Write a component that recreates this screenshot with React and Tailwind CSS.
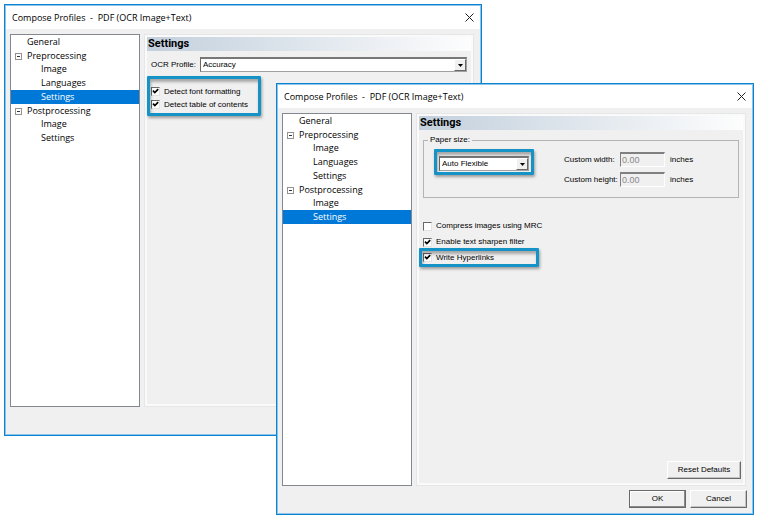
import React, { useState } from 'react';
import clsx from 'clsx';

const TREE = [
  { id: 'general', label: 'General', level: 0 },
  { id: 'pre', label: 'Preprocessing', level: 0, open: true },
  { id: 'pre-image', label: 'Image', level: 1 },
  { id: 'pre-languages', label: 'Languages', level: 1 },
  { id: 'pre-settings', label: 'Settings', level: 1 },
  { id: 'post', label: 'Postprocessing', level: 0, open: true },
  { id: 'post-image', label: 'Image', level: 1 },
  { id: 'post-settings', label: 'Settings', level: 1 },
];

const uiFont = "font-['Open_Sans','Noto_Sans',sans-serif]";
const formFont = "font-['Liberation_Sans',Arial,sans-serif]";

const NavTree = ({ selected }) => (
  <nav className={clsx('w-[130px] shrink-0 border border-[#828790] bg-white text-[9px] leading-3', uiFont)}>
    <ul className="grid h-[110px] auto-rows-fr">
      {TREE.map((node) => (
        <li key={node.id} className={clsx('flex items-center', node.id === selected ? 'bg-[#0078d7] text-white' : 'text-black')}>
          <span className={clsx('flex shrink-0 items-center pl-1', node.level ? 'w-[30px]' : 'w-4')}>
            {node.open && (
              <svg width="7" height="7" viewBox="0 0 7 7" className="mt-0.5" shapeRendering="crispEdges">
                <rect x="0.5" y="0.5" width="6" height="6" fill="#fff" stroke="#929292" />
                <path d="M2 3.5h3" stroke="#333" />
              </svg>
            )}
          </span>
          <a href={`#${node.id}`}>{node.label}</a>
        </li>
      ))}
    </ul>
  </nav>
);

const ProfileWindow = ({ className, selected, footer, children }) => (
  <section className={clsx('absolute flex w-[478px] border border-[#0a84d0]', className)}>
    <div className="flex flex-1 flex-col border border-[#8fc3e8] bg-[#f0f0f0]">
      <header className="flex h-[23px] items-center justify-between bg-white pr-1.5 pl-1.5">
        <h1 className={clsx('text-[9px] leading-3 whitespace-pre text-black', uiFont)}>{'Compose Profiles  -  PDF (OCR Image+Text)'}</h1>
        <button type="button" aria-label="Close">
          <svg width="9" height="9" viewBox="0 0 9 9" fill="none" stroke="#222" strokeWidth="1">
            <path d="M0.5 0.5l8 8M8.5 0.5l-8 8" />
          </svg>
        </button>
      </header>
      <div className="flex min-h-[378px] gap-1 pt-[5px] pr-1.5 pl-1">
        <NavTree selected={selected} />
        <main className={clsx('flex flex-1 flex-col border border-[#e6e6e6] text-[8px] leading-3 text-black', formFont)}>
          <div className="flex flex-1 flex-col border-2 border-[#fafafa]">
            <h2 className="bg-linear-to-r from-[#c3d0dd] to-[#fdfdfd] pl-px font-['Roboto',sans-serif] text-[11px] leading-[14px] font-bold text-black">
              Settings
            </h2>
            {children}
          </div>
        </main>
      </div>
      <footer className="flex h-[27px] items-start justify-end gap-1 pt-1 pr-[5px]">{footer}</footer>
    </div>
  </section>
);

const Highlight = ({ className, children }) => (
  <div className={clsx('relative rounded-[1px] border-[3px] border-[#1593c6] shadow-[1px_2px_3px_rgba(0,0,0,0.35)]', className)}>
    {children}
    <div className="pointer-events-none absolute inset-0 shadow-[inset_1px_3px_3px_rgba(0,0,0,0.3)]" />
  </div>
);

const Check = ({ label, defaultChecked }) => {
  const [checked, setChecked] = useState(!!defaultChecked);
  return (
    <label className="flex items-center gap-1">
      <span className="relative flex size-[9px] shrink-0">
        <input
          type="checkbox"
          checked={checked}
          onChange={(e) => setChecked(e.target.checked)}
          className="size-[9px] appearance-none border border-t-[#696969] border-r-[#e3e3e3] border-b-[#e3e3e3] border-l-[#696969] bg-white"
        />
        {checked && (
          <svg width="9" height="9" viewBox="0 0 9 9" className="pointer-events-none absolute inset-0">
            <path d="M2 3.7l1.8 1.9L7.2 2.1" fill="none" stroke="#000" strokeWidth="1.7" />
          </svg>
        )}
      </span>
      {label}
    </label>
  );
};

const Select = ({ id, value, label, className }) => (
  <div className={clsx('relative', className)}>
    <select
      id={id}
      defaultValue={value}
      aria-label={label}
      className="block h-[15px] w-full appearance-none border border-t-2 border-t-[#777] border-r-[#a0a0a0] border-b-[#a0a0a0] border-l-[#696969] bg-white pr-4 pl-0.5 text-[8px] leading-3"
    >
      <option>{value}</option>
    </select>
    <span className="pointer-events-none absolute top-0.5 right-px bottom-px flex w-3 items-center justify-center border border-t-white border-r-[#696969] border-b-[#696969] border-l-white bg-[#f0f0f0]">
      <svg width="5" height="3" viewBox="0 0 5 3">
        <path d="M0 0h5L2.5 3z" fill="#000" />
      </svg>
    </span>
  </div>
);

const SizeField = ({ id, label }) => (
  <>
    <label htmlFor={id}>{label}</label>
    <input
      id={id}
      defaultValue="0.00"
      disabled
      className="h-[15px] w-[45px] border border-t-2 border-t-[#808080] border-r-white border-b-white border-l-[#808080] bg-[#f0f0f0] pl-px text-[9px] leading-3 text-[#8a8a8a]"
    />
    <span>inches</span>
  </>
);

const PushButton = ({ children, isDefault, className }) => (
  <button
    type="button"
    className={clsx(
      'h-[18px] border text-[8px] leading-3 text-black',
      formFont,
      isDefault
        ? 'border-[#696969] shadow-[inset_-1px_-1px_0_#8a8a8a,inset_1px_1px_0_#fff]'
        : 'border-t-white border-r-[#696969] border-b-[#696969] border-l-white shadow-[inset_-1px_-1px_0_#c4c4c4]',
      className
    )}
  >
    {children}
  </button>
);

const App = () => (
  <div className="relative min-h-screen bg-white">
    <ProfileWindow className="top-1 left-1" selected="pre-settings">
      <div className="flex items-center gap-1 pt-1.5 pr-1 pl-1">
        <label htmlFor="ocr-profile">OCR Profile:</label>
        <Select id="ocr-profile" value="Accuracy" className="flex-1" />
      </div>
      <Highlight className="mt-1 w-[114px] self-start pt-1.5 pb-0.5 pl-px">
        <div className="grid auto-rows-[13px] items-center">
          <Check label="Detect font formatting" defaultChecked />
          <Check label="Detect table of contents" defaultChecked />
        </div>
      </Highlight>
    </ProfileWindow>

    <ProfileWindow
      className="top-[83px] left-[276px]"
      selected="post-settings"
      footer={
        <>
          <PushButton isDefault className="w-[57px]">OK</PushButton>
          <PushButton className="w-[57px]">Cancel</PushButton>
        </>
      }
    >
      <fieldset className="mx-1 mt-1 flex h-[64px] items-start border border-[#b4b4b4] pl-2.5">
        <legend className="-ml-1.5 px-0.5">Paper size:</legend>
        <Highlight className="mt-[3px] w-[100px] px-0.5 pt-1 pb-px">
          <Select value="Auto Flexible" label="Paper size" />
        </Highlight>
        <div className="ml-[30px] grid grid-cols-[56px_45px_auto] items-center gap-y-[5px] pt-1.5 [&>span]:pl-[5px]">
          <SizeField id="custom-width" label="Custom width:" />
          <SizeField id="custom-height" label="Custom height:" />
        </div>
      </fieldset>
      <div className="mt-5 grid auto-rows-[16px] items-center pl-1">
        <Check label="Compress images using MRC" />
        <Check label="Enable text sharpen filter" defaultChecked />
      </div>
      <Highlight className="-mt-0.5 w-[120px] self-start pl-px">
        <div className="grid auto-rows-[13px] items-center">
          <Check label="Write Hyperlinks" defaultChecked />
        </div>
      </Highlight>
      <div className="mt-auto flex justify-end pr-0.5 pb-1">
        <PushButton className="w-[74px]">Reset Defaults</PushButton>
      </div>
    </ProfileWindow>
  </div>
);

export default App;
